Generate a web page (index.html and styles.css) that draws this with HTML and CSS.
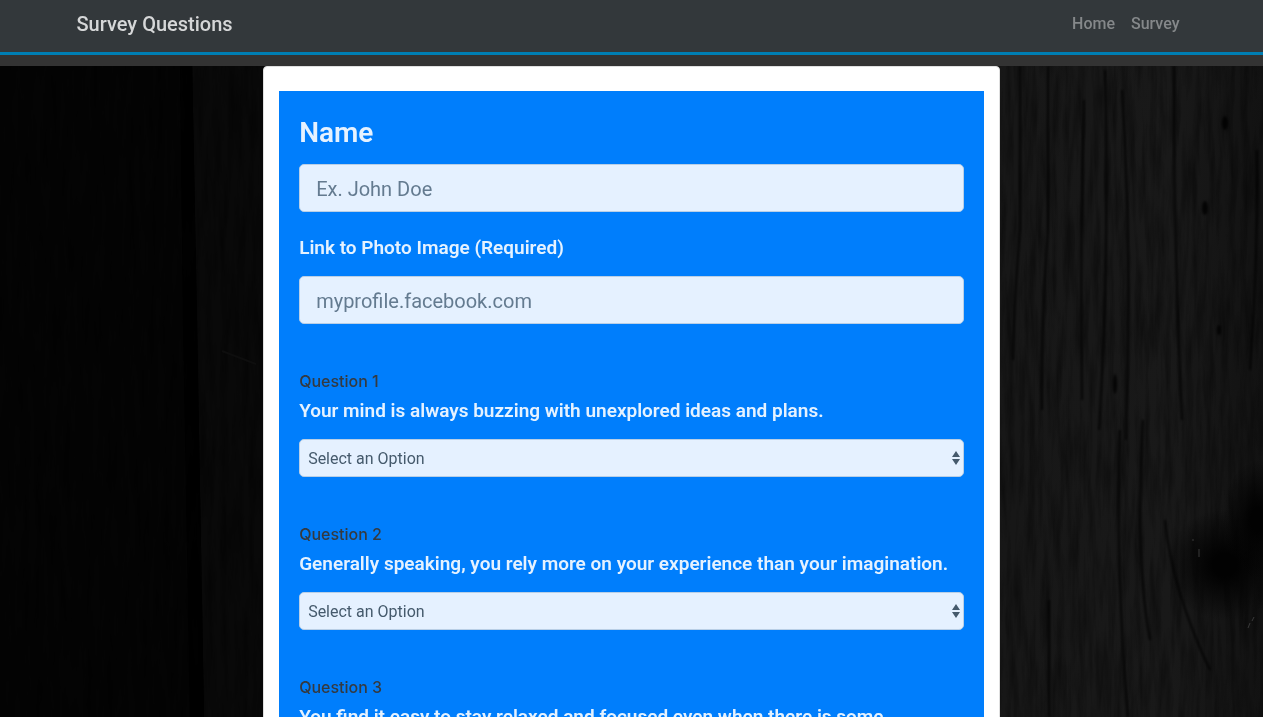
FILE: index.html
```html
<!DOCTYPE html>
<html lang="en">
<head>
<meta charset="utf-8">
<meta name="viewport" content="width=device-width, initial-scale=1">
<title>Survey Questions</title>
<link rel="stylesheet" href="styles.css">
</head>
<body>
<svg class="wood" viewBox="0 0 1263 717" preserveAspectRatio="xMidYMid slice" aria-hidden="true">
  <defs>
    <filter id="grain" x="0" y="0" width="100%" height="100%" color-interpolation-filters="sRGB">
      <feTurbulence type="fractalNoise" baseFrequency="0.14 0.014" numOctaves="4" seed="8"/>
      <feColorMatrix values="0 0 0 0 0  0 0 0 0 0  0 0 0 0 0  2.2 0 0 0 -0.85"/>
    </filter>
    <filter id="soft" x="-20%" y="-20%" width="140%" height="140%"><feGaussianBlur stdDeviation="1"/></filter>
    <radialGradient id="knot"><stop offset="0.2" stop-color="#020202"/><stop offset="1" stop-color="#020202" stop-opacity="0"/></radialGradient>
    <linearGradient id="plank"><stop offset="0" stop-color="#151515"/><stop offset="0.6" stop-color="#171717"/><stop offset="0.85" stop-color="#191919"/><stop offset="1" stop-color="#121212"/></linearGradient>
  </defs>
  <rect width="1263" height="717" fill="#040404"/>
  <path d="M192 60L197 320L204 717H640V60Z" fill="#090909"/>
  <path d="M180 60L183 320L190 717H204L197 320L192 60Z" fill="#010101"/>
  <rect x="640" width="623" height="717" fill="url(#plank)"/>
  <rect width="1263" height="717" filter="url(#grain)" opacity="0.38"/>
  <g fill="none" stroke="#060606" stroke-width="2" stroke-opacity="0.8" filter="url(#soft)">
    <path d="M1020 66V230Q1014 300 1013 360"/>
    <path d="M1048 66V230Q1041 330 1042 410"/>
    <path d="M1084 100Q1080 240 1082 400"/>
    <path d="M1105 70Q1110 250 1099 430"/>
    <path d="M1122 90Q1132 240 1126 440"/>
    <path d="M1174 66Q1173 220 1182 420"/>
    <path d="M1257 150Q1258 260 1250 370"/>
    <path d="M1143 420Q1135 560 1150 640"/>
    <path d="M1120 430Q1115 560 1128 717"/>
    <path d="M1165 520Q1172 590 1210 670"/>
    <path d="M1049 600V717"/>
  </g>
  <g fill="#030303" filter="url(#soft)" opacity="0.8">
    <ellipse cx="1225" cy="123" rx="3" ry="7"/>
    <ellipse cx="1205" cy="208" rx="3" ry="7"/>
    <ellipse cx="1219" cy="330" rx="2" ry="5"/>
    <ellipse cx="1115" cy="384" rx="2" ry="10"/>
  </g>
  <ellipse cx="1225" cy="565" rx="60" ry="56" fill="url(#knot)"/>
  <ellipse cx="1258" cy="520" rx="36" ry="60" fill="url(#knot)"/>
  <g stroke="#3a3a3a" stroke-width="1"><path d="M1192 540h2M1199 549v8M1254 617l-2 4M1250 623l-2 5"/></g>
  <path d="M222 351L256 364" stroke="#0e0e0e" stroke-width="2"/>
</svg>

<header class="site-header">
  <nav class="navbar">
    <a class="brand" href="#">Survey Questions</a>
    <ul class="nav-links">
      <li><a class="nav-link" href="#">Home</a></li>
      <li><a class="nav-link" href="#">Survey</a></li>
    </ul>
  </nav>
</header>

<main class="card">
  <form class="survey">
    <div class="field">
      <label class="name-label" for="name">Name</label>
      <input class="text-box" id="name" type="text" placeholder="Ex. John Doe">
    </div>
    <div class="field">
      <label class="prompt" for="photo">Link to Photo Image (Required)</label>
      <input class="text-box" id="photo" type="text" placeholder="myprofile.facebook.com">
    </div>
    <div class="question">
      <h2 class="question-number">Question 1</h2>
      <label class="prompt" for="q1">Your mind is always buzzing with unexplored ideas and plans.</label>
      <select class="choice" id="q1"><option>Select an Option</option></select>
    </div>
    <div class="question">
      <h2 class="question-number">Question 2</h2>
      <label class="prompt" for="q2">Generally speaking, you rely more on your experience than your imagination.</label>
      <select class="choice" id="q2"><option>Select an Option</option></select>
    </div>
    <div class="question">
      <h2 class="question-number">Question 3</h2>
      <label class="prompt" for="q3">You find it easy to stay relaxed and focused even when there is some pressure.</label>
      <select class="choice" id="q3"><option>Select an Option</option></select>
    </div>
  </form>
</main>
</body>
</html>
```
FILE: styles.css
```css
* { box-sizing: border-box; }

body {
  margin: 0;
  background: #040404;
  font-family: Roboto, Inter, "Liberation Sans", sans-serif;
  font-size: 16px;
  line-height: 24px;
}

.wood {
  position: fixed;
  inset: 0;
  z-index: -1;
  width: 100%;
  height: 100%;
}

.site-header {
  background: #33383b;
  border-bottom: 11px solid #333;
}

.navbar {
  border-bottom: 3px solid #007eb3;
  padding: 4px max(16px, calc(50% - 555px)) 8px;
  display: flex;
  justify-content: space-between;
  align-items: center;
  line-height: 40px;
}

.brand {
  color: #d6d7d8;
  font-size: 20px;
  font-weight: 500;
  text-decoration: none;
}

.nav-links {
  display: flex;
  gap: 16px;
  margin: 0;
  padding: 0 7px;
  list-style: none;
}

.nav-link {
  color: #85888a;
  font-weight: 500;
  font-size: 16px;
  text-decoration: none;
}

.card {
  width: calc(100% * 7 / 12);
  margin: 0 auto 24px;
  padding: 24px 15px;
  background: #fff;
  border: 1px solid #dfdfdf;
  border-radius: 4px;
}

.survey {
  display: flex;
  flex-direction: column;
  gap: 24px;
  padding: 24px 20px;
  background: #007efc;
}

.field,
.question {
  display: flex;
  flex-direction: column;
}

.question { padding-top: 21px; }

.name-label,
.prompt {
  color: #e5f2ff;
  font-weight: 600;
}

.name-label {
  margin-bottom: 14px;
  font-size: 28px;
  line-height: 35px;
}

.prompt {
  margin-bottom: 16px;
  font-size: 19px;
}

.question-number {
  margin: 0 0 6px;
  color: #343a40;
  font-family: Inter, Roboto, sans-serif;
  font-size: 16px;
  font-weight: 500;
  line-height: 24px;
}

.text-box,
.choice {
  width: 100%;
  margin: 0;
  background-color: #e5f1ff;
  border: 1px solid #b9cfe6;
  border-radius: 5px;
  font-family: inherit;
}

.text-box {
  height: 48px;
  padding: 9px 16px 7px;
  color: #495057;
  font-size: 20px;
}

.text-box::placeholder { color: #647b90; opacity: 1; }

.choice {
  height: 38px;
  padding: 7px 24px 5px 8px;
  appearance: none;
  color: #455a6c;
  font-size: 16px;
  line-height: 24px;
  background-image: url("data:image/svg+xml,%3Csvg xmlns='http://www.w3.org/2000/svg' width='8' height='14' viewBox='0 0 8 14'%3E%3Cpath d='M4 0L0 6h8zM4 14L0 8h8z' fill='%23455a6c'/%3E%3C/svg%3E");
  background-repeat: no-repeat;
  background-position: right 3px center;
}
```
